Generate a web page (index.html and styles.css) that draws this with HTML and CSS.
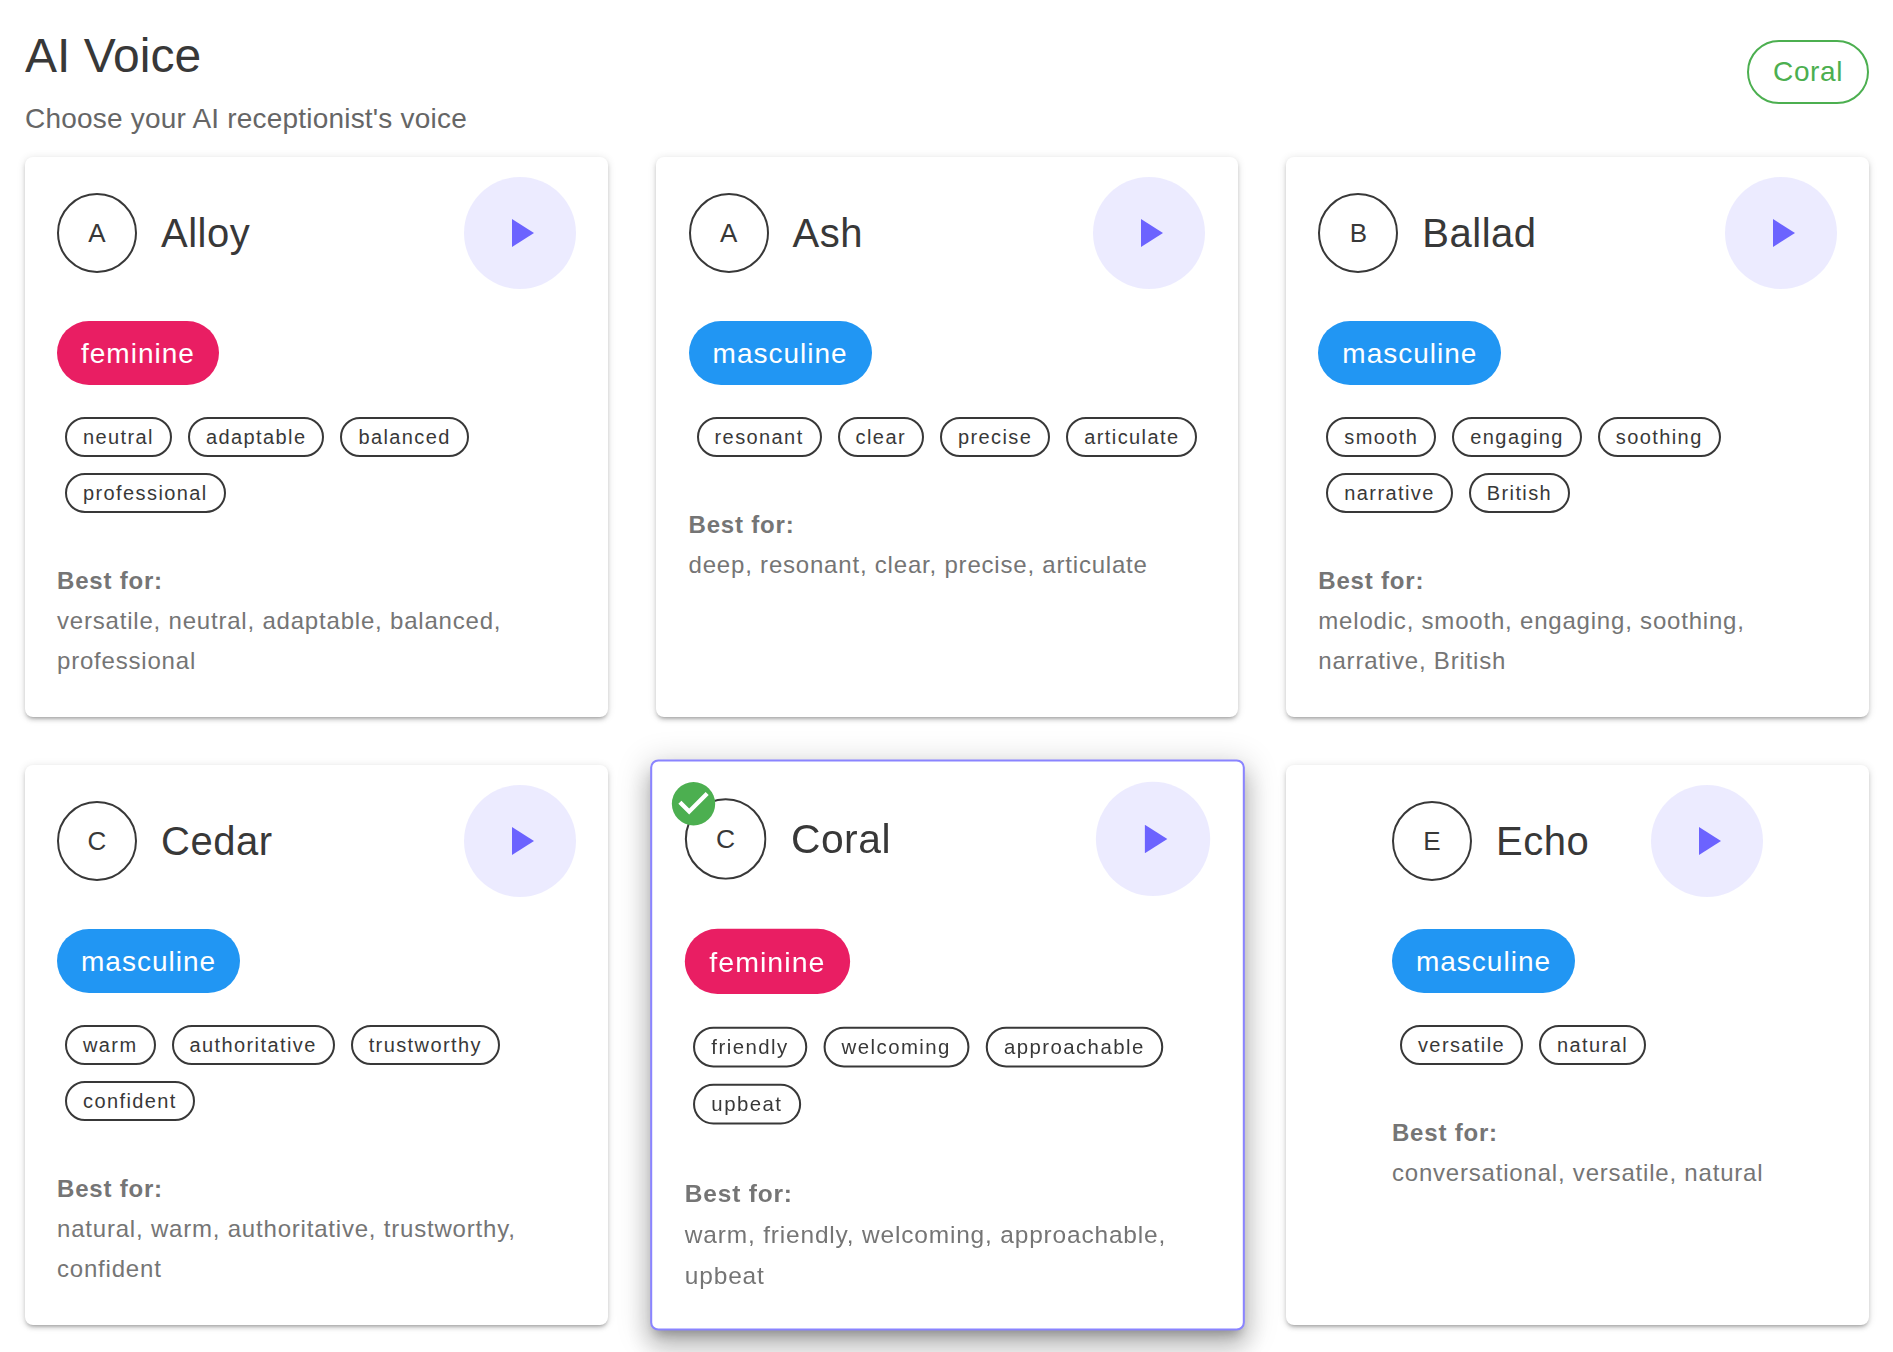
FILE: index.html
```html
<!DOCTYPE html>
<html lang="en">
<head>
<meta charset="UTF-8" />
<meta name="viewport" content="width=device-width, initial-scale=1" />
<title>AI Voice</title>
<link rel="stylesheet" href="styles.css">
</head>
<body>
  <header class="page-header">
    <div>
      <h1>AI Voice</h1>
      <p>Choose your AI receptionist's voice</p>
    </div>
    <span class="current-voice">Coral</span>
  </header>

  <main class="voice-grid">
    <article class="voice-card">
      <div class="voice-body">
        <div class="voice-top">
          <span class="avatar">A</span>
          <h2>Alloy</h2>
          <button class="play" type="button" aria-label="Play Alloy"><svg viewBox="0 0 24 24"><path d="M8 5v14l11-7z"/></svg></button>
        </div>
        <span class="gender feminine">feminine</span>
        <div class="tags">
          <span class="tag">neutral</span>
          <span class="tag">adaptable</span>
          <span class="tag">balanced</span>
          <span class="tag">professional</span>
        </div>
        <h3>Best for:</h3>
        <p class="best">versatile, neutral, adaptable, balanced, professional</p>
      </div>
    </article>

    <article class="voice-card">
      <div class="voice-body">
        <div class="voice-top">
          <span class="avatar">A</span>
          <h2>Ash</h2>
          <button class="play" type="button" aria-label="Play Ash"><svg viewBox="0 0 24 24"><path d="M8 5v14l11-7z"/></svg></button>
        </div>
        <span class="gender masculine">masculine</span>
        <div class="tags">
          <span class="tag">resonant</span>
          <span class="tag">clear</span>
          <span class="tag">precise</span>
          <span class="tag">articulate</span>
        </div>
        <h3>Best for:</h3>
        <p class="best">deep, resonant, clear, precise, articulate</p>
      </div>
    </article>

    <article class="voice-card">
      <div class="voice-body">
        <div class="voice-top">
          <span class="avatar">B</span>
          <h2>Ballad</h2>
          <button class="play" type="button" aria-label="Play Ballad"><svg viewBox="0 0 24 24"><path d="M8 5v14l11-7z"/></svg></button>
        </div>
        <span class="gender masculine">masculine</span>
        <div class="tags">
          <span class="tag">smooth</span>
          <span class="tag">engaging</span>
          <span class="tag">soothing</span>
          <span class="tag">narrative</span>
          <span class="tag">British</span>
        </div>
        <h3>Best for:</h3>
        <p class="best">melodic, smooth, engaging, soothing, narrative, British</p>
      </div>
    </article>

    <article class="voice-card">
      <div class="voice-body">
        <div class="voice-top">
          <span class="avatar">C</span>
          <h2>Cedar</h2>
          <button class="play" type="button" aria-label="Play Cedar"><svg viewBox="0 0 24 24"><path d="M8 5v14l11-7z"/></svg></button>
        </div>
        <span class="gender masculine">masculine</span>
        <div class="tags">
          <span class="tag">warm</span>
          <span class="tag">authoritative</span>
          <span class="tag">trustworthy</span>
          <span class="tag">confident</span>
        </div>
        <h3>Best for:</h3>
        <p class="best">natural, warm, authoritative, trustworthy, confident</p>
      </div>
    </article>

    <article class="voice-card selected">
      <div class="voice-body">
        <div class="voice-top">
          <span class="avatar">C
            <svg class="check" viewBox="0 0 24 24"><circle cx="12" cy="12" r="10" fill="#4caf50"/><path fill="#fff" d="M10 17l-5-5 1.41-1.41L10 14.17l7.59-7.59L19 8l-9 9z"/></svg>
          </span>
          <h2>Coral</h2>
          <button class="play" type="button" aria-label="Play Coral"><svg viewBox="0 0 24 24"><path d="M8 5v14l11-7z"/></svg></button>
        </div>
        <span class="gender feminine">feminine</span>
        <div class="tags">
          <span class="tag">friendly</span>
          <span class="tag">welcoming</span>
          <span class="tag">approachable</span>
          <span class="tag">upbeat</span>
        </div>
        <h3>Best for:</h3>
        <p class="best">warm, friendly, welcoming, approachable, upbeat</p>
      </div>
    </article>

    <article class="voice-card">
      <div class="voice-body">
        <div class="voice-top">
          <span class="avatar">E</span>
          <h2>Echo</h2>
          <button class="play" type="button" aria-label="Play Echo"><svg viewBox="0 0 24 24"><path d="M8 5v14l11-7z"/></svg></button>
        </div>
        <span class="gender masculine">masculine</span>
        <div class="tags">
          <span class="tag">versatile</span>
          <span class="tag">natural</span>
        </div>
        <h3>Best for:</h3>
        <p class="best">conversational, versatile, natural</p>
      </div>
    </article>
  </main>
</body>
</html>
```

FILE: styles.css
```css
/* Reset */
* {
  box-sizing: border-box;
}
body {
  margin: 0;
  padding: 28px 24px 27px 25px;
  font-family: "Liberation Sans", Arial, sans-serif;
  background: #fff;
  color: #383838;
}

/* Header */
.page-header {
  display: flex;
  justify-content: space-between;
  align-items: flex-start;
  margin-bottom: 16px;
}
.page-header h1 {
  margin: 0;
  font-size: 48px;
  font-weight: 400;
  line-height: 56px;
}
.page-header p {
  margin: 12px 0 0;
  font-size: 28px;
  line-height: 45px;
  letter-spacing: 0.2px;
  color: #666;
}
.current-voice {
  margin-top: 12px;
  height: 64px;
  padding: 0 24px;
  border: 2px solid #4caf50;
  border-radius: 32px;
  font-size: 28px;
  line-height: 60px;
  letter-spacing: 0.6px;
  color: #4caf50;
}

/* Cards */
.voice-grid {
  display: grid;
  grid-template-columns: repeat(3, 1fr);
  grid-auto-rows: 1fr;
  gap: 48px;
}
.voice-card {
  display: flex;
  justify-content: center;
  min-width: 0;
  background: #fff;
  border-radius: 8px;
  box-shadow: 0 3px 3px -2px rgba(0, 0, 0, 0.2), 0 3px 4px 0 rgba(0, 0, 0, 0.14), 0 1px 8px 0 rgba(0, 0, 0, 0.12);
}
.voice-card.selected {
  border: 2px solid #8a84ff;
  transform: scale(1.02);
  box-shadow: 0 8px 10px -5px rgba(0, 0, 0, 0.25), 0 16px 24px 2px rgba(0, 0, 0, 0.18), 0 6px 30px 5px rgba(0, 0, 0, 0.15);
}
.voice-body {
  min-width: 0;
  padding: 20px 32px 32px;
}
.voice-top {
  display: flex;
  align-items: center;
  margin-bottom: 32px;
}
.avatar {
  position: relative;
  flex: none;
  width: 80px;
  height: 80px;
  border: 2px solid #383838;
  border-radius: 50%;
  background: #fff;
  font-size: 26px;
  line-height: 76px;
  text-align: center;
}
.check {
  position: absolute;
  top: -22px;
  left: -19px;
  width: 51px;
  height: 51px;
}
.voice-top h2 {
  flex: 1;
  margin: 0 24px;
  font-size: 40px;
  font-weight: 400;
  line-height: 48px;
  letter-spacing: 0.5px;
  white-space: nowrap;
}
.play {
  display: flex;
  align-items: center;
  justify-content: center;
  flex: none;
  width: 112px;
  height: 112px;
  padding: 0;
  border: none;
  border-radius: 50%;
  background: rgba(108, 99, 255, 0.13);
  cursor: pointer;
}
.play svg {
  width: 48px;
  height: 48px;
  fill: #6c63ff;
}

/* Gender chip and trait tags */
.gender {
  display: block;
  width: fit-content;
  height: 64px;
  padding: 0 24px;
  border-radius: 32px;
  font-size: 28px;
  line-height: 66px;
  letter-spacing: 1px;
  color: #fff;
}
.feminine {
  background: #e91e63;
}
.masculine {
  background: #2196f3;
}
.tags {
  display: flex;
  flex-wrap: wrap;
  margin-top: 24px;
}
.tag {
  height: 40px;
  margin: 8px;
  padding: 0 16px;
  border: 2px solid #383838;
  border-radius: 20px;
  font-size: 20px;
  line-height: 36px;
  letter-spacing: 1.4px;
  white-space: nowrap;
}

/* Best for */
.voice-body h3 {
  margin: 40px 0 0;
  font-size: 24px;
  font-weight: 700;
  line-height: 40px;
  letter-spacing: 0.8px;
  color: #757575;
}
.best {
  margin: 0;
  font-size: 24px;
  line-height: 40px;
  letter-spacing: 0.8px;
  color: #757575;
}
```
